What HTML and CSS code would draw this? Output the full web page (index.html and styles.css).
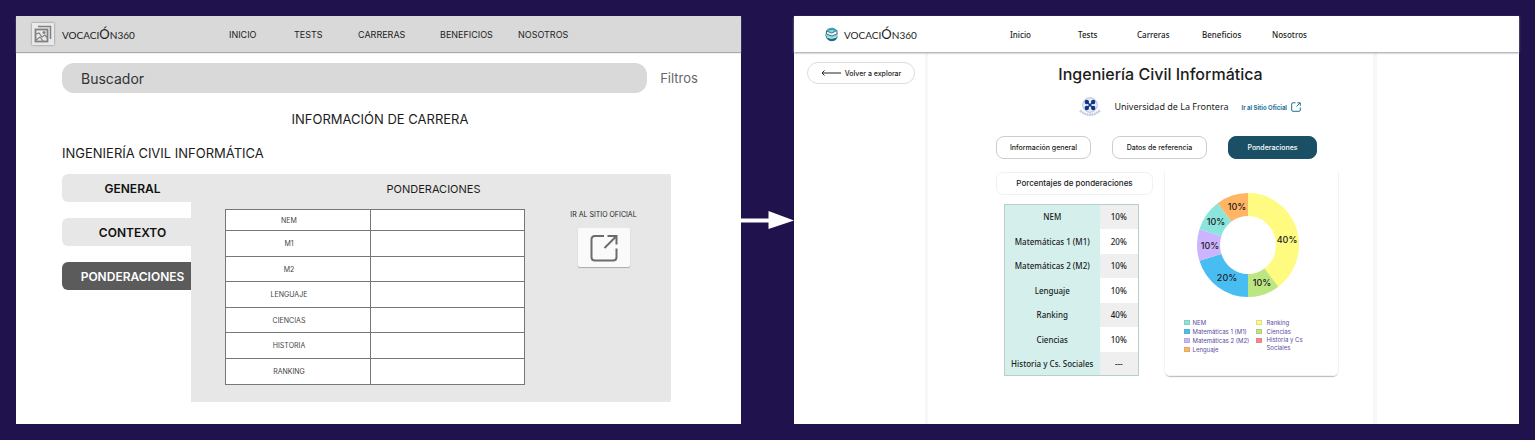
FILE: index.html
```html
<!DOCTYPE html>
<html lang="es">
<head>
<meta charset="utf-8">
<title>Vocación360</title>
<meta name="viewport" content="width=device-width, initial-scale=1">
<link rel="stylesheet" href="styles.css">
</head>
<body>
<div class="board">
  <section class="screen wire">
    <header class="wire-header">
      <div class="brand">
        <svg class="wire-logo" viewBox="0 0 22 22" aria-hidden="true">
          <rect width="22" height="22" rx="1" fill="#e9e9e9"/>
          <path d="M6 3.500H18.500V16" fill="none" stroke="#808080" stroke-width="1.500"/>
          <rect x="3.500" y="6.500" width="12" height="12" fill="none" stroke="#808080" stroke-width="1.800"/>
          <circle cx="12" cy="9.500" r="1.500" fill="#808080"/>
          <path d="M4 11l3-1 3 4 3-2 2.500 3M4 17l4-3 3 4" fill="none" stroke="#808080" stroke-width="1.200"/>
        </svg>
        <span class="brand-name">VOCACI<span class="brand-accent">Ó</span>N360</span>
      </div>
      <nav class="nav wire-nav">
        <a href="#">INICIO</a><a href="#">TESTS</a><a href="#">CARRERAS</a><a href="#">BENEFICIOS</a><a href="#">NOSOTROS</a>
      </nav>
    </header>
    <main class="wire-main">
      <div class="search-row">
        <input class="search" type="search" placeholder="Buscador" aria-label="Buscador">
        <button class="filters" type="button">Filtros</button>
      </div>
      <h1 class="wire-title">INFORMACIÓN DE CARRERA</h1>
      <h2 class="wire-career">INGENIERÍA CIVIL INFORMÁTICA</h2>
      <div class="wire-body">
        <div class="wire-tabs">
          <button class="wire-tab" type="button">GENERAL</button>
          <button class="wire-tab" type="button">CONTEXTO</button>
          <button class="wire-tab wire-tab-active" type="button">PONDERACIONES</button>
        </div>
        <section class="wire-panel">
          <h3 class="wire-panel-title">PONDERACIONES</h3>
          <div class="wire-panel-body">
            <table class="wire-table">
              <tr><th scope="row">NEM</th><td></td></tr>
              <tr><th scope="row">M1</th><td></td></tr>
              <tr><th scope="row">M2</th><td></td></tr>
              <tr><th scope="row">LENGUAJE</th><td></td></tr>
              <tr><th scope="row">CIENCIAS</th><td></td></tr>
              <tr><th scope="row">HISTORIA</th><td></td></tr>
              <tr><th scope="row">RANKING</th><td></td></tr>
            </table>
            <div class="wire-site">
              <span id="site-label">IR AL SITIO OFICIAL</span>
              <a class="wire-site-link" href="#" aria-labelledby="site-label">
                <svg viewBox="0 0 28 28" class="wire-site-icon" fill="none" stroke="#6b6b6b" stroke-width="2" aria-hidden="true">
                  <path d="M14 2H5Q1.500 2 1.500 5.500V23Q1.500 26.500 5 26.500H23Q26.500 26.500 26.500 23V14.500M17.500 2H26.500V10.500M26 2.500L14.500 14"/>
                </svg>
              </a>
            </div>
          </div>
        </section>
      </div>
    </main>
  </section>

  <svg class="arrow" viewBox="0 0 53 20" aria-hidden="true">
    <path d="M0 8.500H27.500V1L53 10.500L27.500 19V12.500H0Z" fill="#fff"/>
  </svg>

  <section class="screen app">
    <header class="app-header">
      <div class="brand">
        <svg class="app-logo" viewBox="0 0 15 15" aria-hidden="true">
          <circle cx="7.500" cy="7.500" r="6.300" fill="#8ed5df"/>
          <path d="M2 4Q4 .800 8 .800Q12 1 13 4L8 3Z" fill="#3a9fb0"/>
          <path d="M2.500 4L7.500 6L13 3.500V7L8 9L2.500 7Z" fill="#e8f7fa" stroke="#24566b" stroke-width=".8"/>
          <path d="M1 6Q2 12 8 11.500Q12 11.500 13.800 9Q13 14 8 14.300Q2 14 1 6Z" fill="#236a80"/>
          <path d="M3 10Q7 12.500 12.500 10" fill="none" stroke="#b9eef2"/>
        </svg>
        <span class="brand-name">VOCACI<span class="brand-accent">Ó</span>N360</span>
      </div>
      <nav class="nav app-nav">
        <a href="#">Inicio</a><a href="#">Tests</a><a href="#">Carreras</a><a href="#">Beneficios</a><a href="#">Nosotros</a>
      </nav>
    </header>
    <div class="app-body">
      <aside class="app-side">
        <a class="back" href="#">
          <svg class="back-icon" viewBox="0 0 20 6" fill="none" stroke="#222" aria-hidden="true"><path d="M20 3H1M3.500 .500L1 3L3.500 5.500"/></svg>
          Volver a explorar
        </a>
      </aside>
      <main class="app-main">
        <h1 class="app-title">Ingeniería Civil Informática</h1>
        <div class="university">
          <svg class="crest" viewBox="0 0 22 20" aria-hidden="true">
            <circle cx="11" cy="8" r="7.300" fill="#e6ebf4" stroke="#a5b4d1" stroke-width=".8"/>
            <path d="M8 5L14 11M14 5L8 11" stroke="#12358a" stroke-width="1.500"/>
            <g fill="#12358a"><circle cx="7.800" cy="5" r="2.200"/><circle cx="14.200" cy="5" r="2.200"/><circle cx="7.800" cy="11" r="2.200"/><circle cx="14.200" cy="11" r="2.200"/></g>
            <path d="M1 13.500Q11 22 21 13.500" fill="none" stroke="#c3cede" stroke-width="2.500" stroke-dasharray="2 .5"/>
          </svg>
          <span class="university-name">Universidad de La Frontera</span>
          <a class="site" href="#">Ir al Sitio Oficial
            <svg class="site-icon" viewBox="0 0 10 10" fill="none" stroke="#1f7297" aria-hidden="true"><path d="M4.500 .800H2Q.700 .800 .700 2V8Q.700 9.300 2 9.300H8Q9.300 9.300 9.300 8V5.500M6.300 .800H9.300V3.800M9 1L5.500 4.500"/></svg>
          </a>
        </div>
        <div class="app-tabs">
          <button class="app-tab" type="button">Información general</button>
          <button class="app-tab" type="button">Datos de referencia</button>
          <button class="app-tab app-tab-active" type="button">Ponderaciones</button>
        </div>
        <div class="weights">
          <section class="weights-left">
            <h2 class="weights-title">Porcentajes de ponderaciones</h2>
            <table class="weights-table">
              <tr><th scope="row">NEM</th><td>10%</td></tr>
              <tr><th scope="row">Matemáticas 1 (M1)</th><td>20%</td></tr>
              <tr><th scope="row">Matemáticas 2 (M2)</th><td>10%</td></tr>
              <tr><th scope="row">Lenguaje</th><td>10%</td></tr>
              <tr><th scope="row">Ranking</th><td>40%</td></tr>
              <tr><th scope="row">Ciencias</th><td>10%</td></tr>
              <tr><th scope="row">Historia y Cs. Sociales</th><td>---</td></tr>
            </table>
          </section>
          <section class="chart-card">
            <svg class="donut" viewBox="0 0 104 106" role="img" aria-label="Ponderaciones">
              <g class="slices">
                <ellipse class="yellow" cx="52" cy="53" rx="39.500" ry="40.500" pathLength="100" stroke-dasharray="40 60" stroke-dashoffset="-75"/>
                <ellipse class="green" cx="52" cy="53" rx="39.500" ry="40.500" pathLength="100" stroke-dasharray="10 90" stroke-dashoffset="-15"/>
                <ellipse class="blue" cx="52" cy="53" rx="39.500" ry="40.500" pathLength="100" stroke-dasharray="20 80" stroke-dashoffset="-25"/>
                <ellipse class="lilac" cx="52" cy="53" rx="39.500" ry="40.500" pathLength="100" stroke-dasharray="10 90" stroke-dashoffset="-45"/>
                <ellipse class="teal" cx="52" cy="53" rx="39.500" ry="40.500" pathLength="100" stroke-dasharray="10 90" stroke-dashoffset="-55"/>
                <ellipse class="orange" cx="52" cy="53" rx="39.500" ry="40.500" pathLength="100" stroke-dasharray="10 90" stroke-dashoffset="-65"/>
              </g>
              <g class="slice-labels">
                <text x="41" y="18">10%</text><text x="20" y="33">10%</text><text x="14" y="57">10%</text>
                <text x="31" y="89">20%</text><text x="66" y="94">10%</text><text x="91" y="51">40%</text>
              </g>
            </svg>
            <div class="legend">
              <ul>
                <li><i class="swatch teal"></i>NEM</li>
                <li><i class="swatch blue"></i>Matemáticas 1 (M1)</li>
                <li><i class="swatch lilac"></i>Matemáticas 2 (M2)</li>
                <li><i class="swatch orange"></i>Lenguaje</li>
              </ul>
              <ul>
                <li><i class="swatch yellow"></i>Ranking</li>
                <li><i class="swatch green"></i>Ciencias</li>
                <li><i class="swatch red"></i><span>Historia y Cs<br>Sociales</span></li>
              </ul>
            </div>
          </section>
        </div>
      </main>
    </div>
  </section>
</div>
</body>
</html>
```
FILE: styles.css
```css
* { box-sizing: border-box; }
body {
  margin: 0;
  background: #20124d;
  font-family: Inter, "Open Sans", sans-serif;
  color: #1c1c1c;
}
h1, h2, h3, ul { margin: 0; padding: 0; font-weight: 400; }
a { color: inherit; text-decoration: none; }
button, input { font: inherit; color: inherit; border: 0; padding: 0; }
button { cursor: pointer; }

.board {
  display: grid;
  grid-template-columns: 1fr 53px 1fr;
  min-height: 100vh;
  padding: 16px;
}
.screen { background: #fff; display: flex; flex-direction: column; min-width: 0; }
.arrow { width: 53px; height: 20px; align-self: center; }

.brand { display: flex; align-items: center; }
.brand-name { font-family: Lato, sans-serif; font-size: 10px; line-height: 20px; white-space: nowrap; }
.brand-accent { font-size: 13px; }
.nav { display: grid; }

/* Wireframe */
.wire-header {
  display: grid;
  grid-template-columns: 213px 1fr;
  align-items: center;
  height: 36px;
  background: #d9d9d9;
  box-shadow: 0 1px 1px #aaa;
}
.wire-header .brand { gap: 8px; padding-left: 16px; }
.wire-logo { width: 22px; height: 22px; box-shadow: 0 0 2px #777; }
.wire-nav { grid-template-columns: 65px 64px 82px 78px 1fr; font-size: 9px; }
.wire-main { padding: 11px 43px 20px 46px; }
.search-row { display: grid; grid-template-columns: 1fr 38px; gap: 13px; }
.search {
  height: 30px;
  min-width: 0;
  padding: 0 19px;
  border-radius: 12px;
  background: #d9d9d9;
  font-size: 14px;
  appearance: none;
}
.search::placeholder { color: #333; opacity: 1; }
.filters { background: none; color: #666; font-size: 13px; white-space: nowrap; }
.wire-title { margin-top: 16px; font-size: 13px; line-height: 20px; text-align: center; }
.wire-career { margin-top: 14px; font-size: 13px; line-height: 20px; }
.wire-body { display: grid; grid-template-columns: 129px 1fr; margin: 11px 27px 0 0; }
.wire-tabs { display: flex; flex-direction: column; gap: 16px; }
.wire-tab {
  height: 28px;
  padding-left: 12px;
  border-radius: 6px 0 0 6px;
  background: #e7e7e7;
  color: #111;
  font-size: 12px;
  font-weight: 600;
}
.wire-tab-active { background: #5b5b5b; color: #fff; }
.wire-panel { padding: 5px 29px 17px 34px; background: #e7e7e7; border-radius: 0 2px 2px 0; }
.wire-panel-title { font-size: 11px; line-height: 20px; text-align: center; }
.wire-panel-body { display: grid; grid-template-columns: 300px 1fr; gap: 40px; margin-top: 10px; }
.wire-table { border-collapse: collapse; table-layout: fixed; width: 100%; background: #fff; }
.wire-table th, .wire-table td { padding: 0; border: 1px solid #777; }
.wire-table th { width: 145px; height: 25px; padding-right: 18px; color: #444; font-size: 7px; font-weight: 400; }
.wire-table tr:first-child th { height: 21px; }
.wire-table tr:nth-child(even) th { height: 26px; }
.wire-table tr:last-child th { height: 26px; }
.wire-site { display: flex; flex-direction: column; align-items: center; gap: 7px; font-size: 7px; line-height: 12px; white-space: nowrap; }
.wire-site-link {
  display: grid;
  place-items: center;
  width: 52px;
  height: 39px;
  border-radius: 2px;
  background: #fafafa;
  box-shadow: 0 1px 1px #aaa;
}
.wire-site-icon { width: 28px; height: 28px; }

/* Finished design */
.app-header {
  position: relative;
  display: grid;
  grid-template-columns: 216px 1fr;
  align-items: center;
  height: 36px;
  box-shadow: 0 1px 2px #999;
}
.app-header .brand { gap: 5px; padding-left: 30px; }
.app-logo { width: 15px; height: 15px; }
.app-nav { grid-template-columns: 68px 59px 65px 70px 1fr; font-family: "Noto Sans", sans-serif; font-size: 8px; font-weight: 500; }
.app-body { flex: 1; display: grid; grid-template-columns: 134px 1fr 142px; }
.app-side { padding: 10px 13px 0 13px; border-right: 3px solid #f7f7f7; }
.back {
  display: flex;
  align-items: center;
  justify-content: center;
  gap: 4px;
  height: 22px;
  border: 1px solid #ddd;
  border-radius: 11px;
  font-size: 7px;
  font-weight: 500;
  white-space: nowrap;
}
.app-side .back { margin-right: -3px; }
.back-icon { width: 20px; height: 6px; }
.app-main { padding: 11px 34px 0 68px; border-right: 4px solid #f7f7f7; }
.app-title { padding-right: 14px; font-size: 16px; font-weight: 500; line-height: 22px; text-align: center; }
.university { display: flex; align-items: center; justify-content: flex-end; margin: 12px 38px 0 0; }
.crest { width: 22px; height: 20px; }
.university-name { margin: 0 13px; font-family: "Noto Sans", sans-serif; font-size: 9px; line-height: 20px; white-space: nowrap; }
.site { display: flex; align-items: center; gap: 4px; color: #1f7297; font-size: 6px; font-weight: 700; white-space: nowrap; }
.site-icon { width: 10px; height: 10px; }
.app-tabs { display: grid; grid-template-columns: 95px 95px 89px; gap: 21px; margin-top: 19px; }
.app-tab {
  height: 23px;
  border: 1px solid #ccc;
  border-radius: 8px;
  background: #fff;
  font-size: 7px;
  font-weight: 500;
  white-space: nowrap;
}
.app-tab-active { border-color: #1b4f66; background: #1b4f66; color: #fff; }
.weights { display: grid; grid-template-columns: 157px 1fr; gap: 11px; margin-top: 13px; }
.weights-title {
  height: 23px;
  border: 1px solid #f1f1f1;
  border-radius: 7px;
  font-size: 8px;
  font-weight: 500;
  line-height: 21px;
  text-align: center;
}
.weights-table {
  width: 135px;
  margin: 9px 0 0 8px;
  border: 1px solid #b9cfcb;
  border-collapse: collapse;
  font-family: "Noto Sans", sans-serif;
  font-size: 8px;
  font-weight: 500;
  text-align: center;
}
.weights-table th, .weights-table td { height: 24px; padding: 0; }
.weights-table tr:nth-child(even) > * { height: 25px; }
.weights-table th { width: 95px; background: #d5f0ec; font-weight: 500; white-space: nowrap; }
.weights-table tr:nth-child(odd) td { background: #efefef; }
.chart-card {
  display: flex;
  flex-direction: column;
  align-items: center;
  height: 204px;
  padding: 20px 8px 0 0;
  border: 1px solid #f3f3f3;
  border-top: 0;
  border-radius: 0 0 6px 6px;
  box-shadow: 0 2px 1px -1px #bbb;
}
.donut { width: 104px; height: 106px; flex: none; }
.slices ellipse { fill: none; stroke: currentColor; stroke-width: 23px; }
.slice-labels { font-size: 9px; font-weight: 500; text-anchor: middle; fill: #222; }
.teal { color: #8ae6dc; }
.blue { color: #48bdf2; }
.lilac { color: #cdb4ff; }
.orange { color: #ffb562; }
.yellow { color: #fffb80; }
.green { color: #bce680; }
.red { color: #ff8585; }
.legend { display: grid; grid-template-columns: 72px 50px; padding: 20px 6px 0 0; color: #5b4a9e; font-size: 6px; line-height: 9px; }
.legend ul { list-style: none; }
.legend li { display: grid; grid-template-columns: 6px 1fr; gap: 3px; white-space: nowrap; }
.legend ul:last-child li { gap: 5px; }
.legend li span { line-height: 8px; }
.swatch { width: 6px; height: 5px; margin-top: 2px; background: currentColor; border: 1px solid #8884; }
```
